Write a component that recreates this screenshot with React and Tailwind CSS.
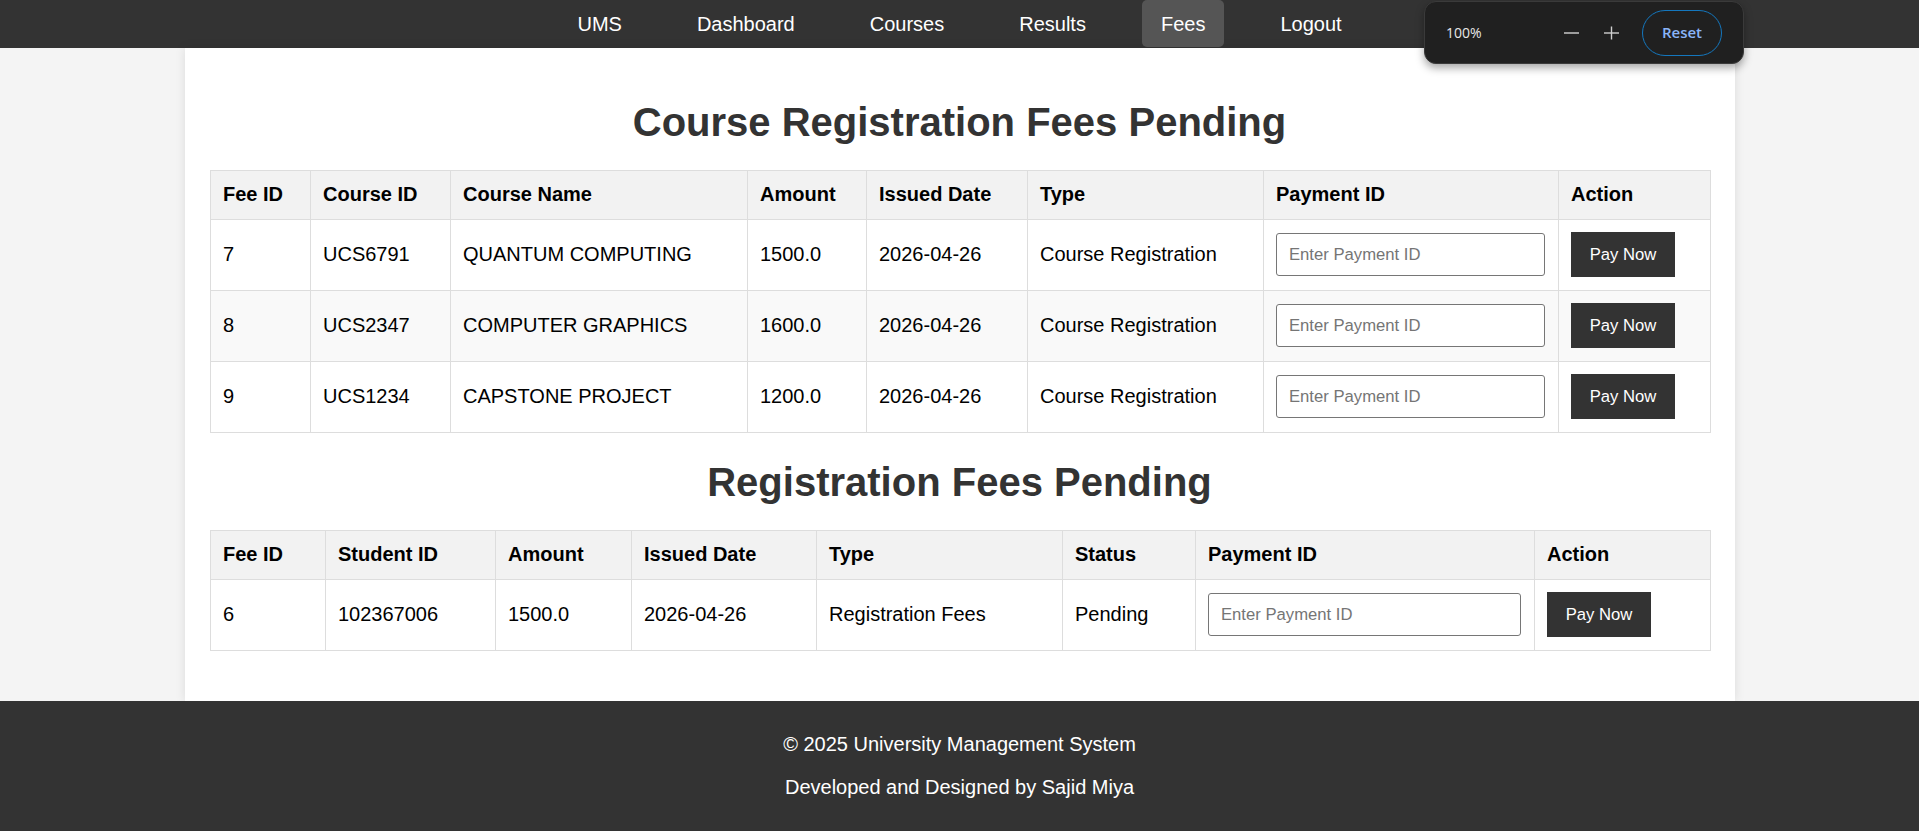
import React from 'react';

const navLinks = ['UMS', 'Dashboard', 'Courses', 'Results', 'Fees', 'Logout'];

const courseFees = [
  { id: 7, courseId: 'UCS6791', name: 'QUANTUM COMPUTING', amount: '1500.0', date: '2026-04-26', type: 'Course Registration' },
  { id: 8, courseId: 'UCS2347', name: 'COMPUTER GRAPHICS', amount: '1600.0', date: '2026-04-26', type: 'Course Registration' },
  { id: 9, courseId: 'UCS1234', name: 'CAPSTONE PROJECT', amount: '1200.0', date: '2026-04-26', type: 'Course Registration' }
];

const regFees = [
  { id: 6, studentId: '102367006', amount: '1500.0', date: '2026-04-26', type: 'Registration Fees', status: 'Pending' }
];

const th = 'border border-[#ddd] bg-[#f2f2f2] px-[12.5px] pt-[11.5px] pb-[13.5px] text-left font-bold leading-[23px]';
const td = 'border border-[#ddd] px-[12.5px] pt-[12px] pb-[13px] align-middle leading-[23px]';

const PaymentInput = () => (
  <input
    type="text"
    placeholder="Enter Payment ID"
    className="block h-[43px] w-full rounded-[3px] border border-[#767676] bg-white px-[12px] text-[16.67px] text-black placeholder:text-[#757575] outline-none"
  />
);

const PayButton = () => (
  <button className="h-[45px] bg-[#333] px-[18.75px] text-[16.67px] leading-[19px] text-white">
    Pay Now
  </button>
);

const ZoomWidget = () => (
  <div className="absolute right-[175px] top-[1px] z-50 flex h-[63px] w-[320px] items-center rounded-[12px] border border-[#3a3a3a] bg-[#202020] pl-[21px] pr-[21px] shadow-[0_4px_8px_rgba(0,0,0,0.35)] font-['Open_Sans','Noto_Sans',sans-serif]">
    <span className="text-[14px] text-[#e8e8e8]">100%</span>
    <div className="ml-auto flex items-center gap-[25px]">
      <svg width="15" height="15" viewBox="0 0 15 15">
        <line x1="0" y1="8" x2="15" y2="8" stroke="#bdbdbd" strokeWidth="1.6" />
      </svg>
      <svg width="15" height="15" viewBox="0 0 15 15">
        <line x1="0" y1="8" x2="15" y2="8" stroke="#cfcfcf" strokeWidth="1.4" />
        <line x1="7.5" y1="1.5" x2="7.5" y2="14.5" stroke="#cfcfcf" strokeWidth="1.4" />
      </svg>
      <button className="ml-[-2px] flex h-[46px] w-[80px] items-center justify-center rounded-full border border-[#1477be] text-[15px] font-semibold text-[#8ab4f8]">
        Reset
      </button>
    </div>
  </div>
);

const App = () => {
  return (
    <div className="relative min-h-screen bg-[#f4f4f4] font-['Liberation_Sans',Arial,sans-serif] text-[20px] text-black">
      {/* Navigation */}
      <nav className="flex h-12 items-start justify-center gap-[37.5px] bg-[#333]">
        {navLinks.map((link) => (
          <a
            key={link}
            href="#"
            className={`h-[47px] rounded-[5px] px-[18.75px] pt-[12.5px] leading-[23px] text-white ${
              link === 'Fees' ? 'bg-[#555]' : ''
            }`}
          >
            {link}
          </a>
        ))}
      </nav>

      <ZoomWidget />

      {/* Main card */}
      <main className="mx-auto w-[1550px] bg-white px-[25px] pb-[50px] pt-[25px] shadow-[0_0_10px_rgba(0,0,0,0.1)]">
        <h2 className="mb-[25px] mt-[26px] text-center text-[40px] font-bold leading-[46px] text-[#333]">
          Course Registration Fees Pending
        </h2>
        <table className="w-[1500px] table-fixed border-collapse">
          <colgroup>
            <col className="w-[100px]" />
            <col className="w-[140px]" />
            <col className="w-[297px]" />
            <col className="w-[119px]" />
            <col className="w-[161px]" />
            <col className="w-[236px]" />
            <col className="w-[295px]" />
            <col className="w-[152px]" />
          </colgroup>
          <thead>
            <tr>
              <th className={th}>Fee ID</th>
              <th className={th}>Course ID</th>
              <th className={th}>Course Name</th>
              <th className={th}>Amount</th>
              <th className={th}>Issued Date</th>
              <th className={th}>Type</th>
              <th className={th}>Payment ID</th>
              <th className={th}>Action</th>
            </tr>
          </thead>
          <tbody>
            {courseFees.map((fee, i) => (
              <tr key={fee.id} className={i % 2 === 1 ? 'bg-[#f9f9f9]' : 'bg-white'}>
                <td className={td}>{fee.id}</td>
                <td className={td}>{fee.courseId}</td>
                <td className={td}>{fee.name}</td>
                <td className={td}>{fee.amount}</td>
                <td className={td}>{fee.date}</td>
                <td className={td}>{fee.type}</td>
                <td className={td}><PaymentInput /></td>
                <td className={td}><PayButton /></td>
              </tr>
            ))}
          </tbody>
        </table>

        <h2 className="mb-[25px] mt-[26px] text-center text-[40px] font-bold leading-[46px] text-[#333]">
          Registration Fees Pending
        </h2>
        <table className="w-[1500px] table-fixed border-collapse">
          <colgroup>
            <col className="w-[115px]" />
            <col className="w-[170px]" />
            <col className="w-[136px]" />
            <col className="w-[185px]" />
            <col className="w-[246px]" />
            <col className="w-[133px]" />
            <col className="w-[339px]" />
            <col className="w-[176px]" />
          </colgroup>
          <thead>
            <tr>
              <th className={th}>Fee ID</th>
              <th className={th}>Student ID</th>
              <th className={th}>Amount</th>
              <th className={th}>Issued Date</th>
              <th className={th}>Type</th>
              <th className={th}>Status</th>
              <th className={th}>Payment ID</th>
              <th className={th}>Action</th>
            </tr>
          </thead>
          <tbody>
            {regFees.map((fee) => (
              <tr key={fee.id} className="bg-white">
                <td className={td}>{fee.id}</td>
                <td className={td}>{fee.studentId}</td>
                <td className={td}>{fee.amount}</td>
                <td className={td}>{fee.date}</td>
                <td className={td}>{fee.type}</td>
                <td className={td}>{fee.status}</td>
                <td className={td}><PaymentInput /></td>
                <td className={td}><PayButton /></td>
              </tr>
            ))}
          </tbody>
        </table>
      </main>

      {/* Footer */}
      <footer className="flex flex-col items-center gap-[20px] bg-[#333] py-[32px] leading-[23px] text-white">
        <p>© 2025 University Management System</p>
        <p>Developed and Designed by Sajid Miya</p>
      </footer>
    </div>
  );
};

export default App;
